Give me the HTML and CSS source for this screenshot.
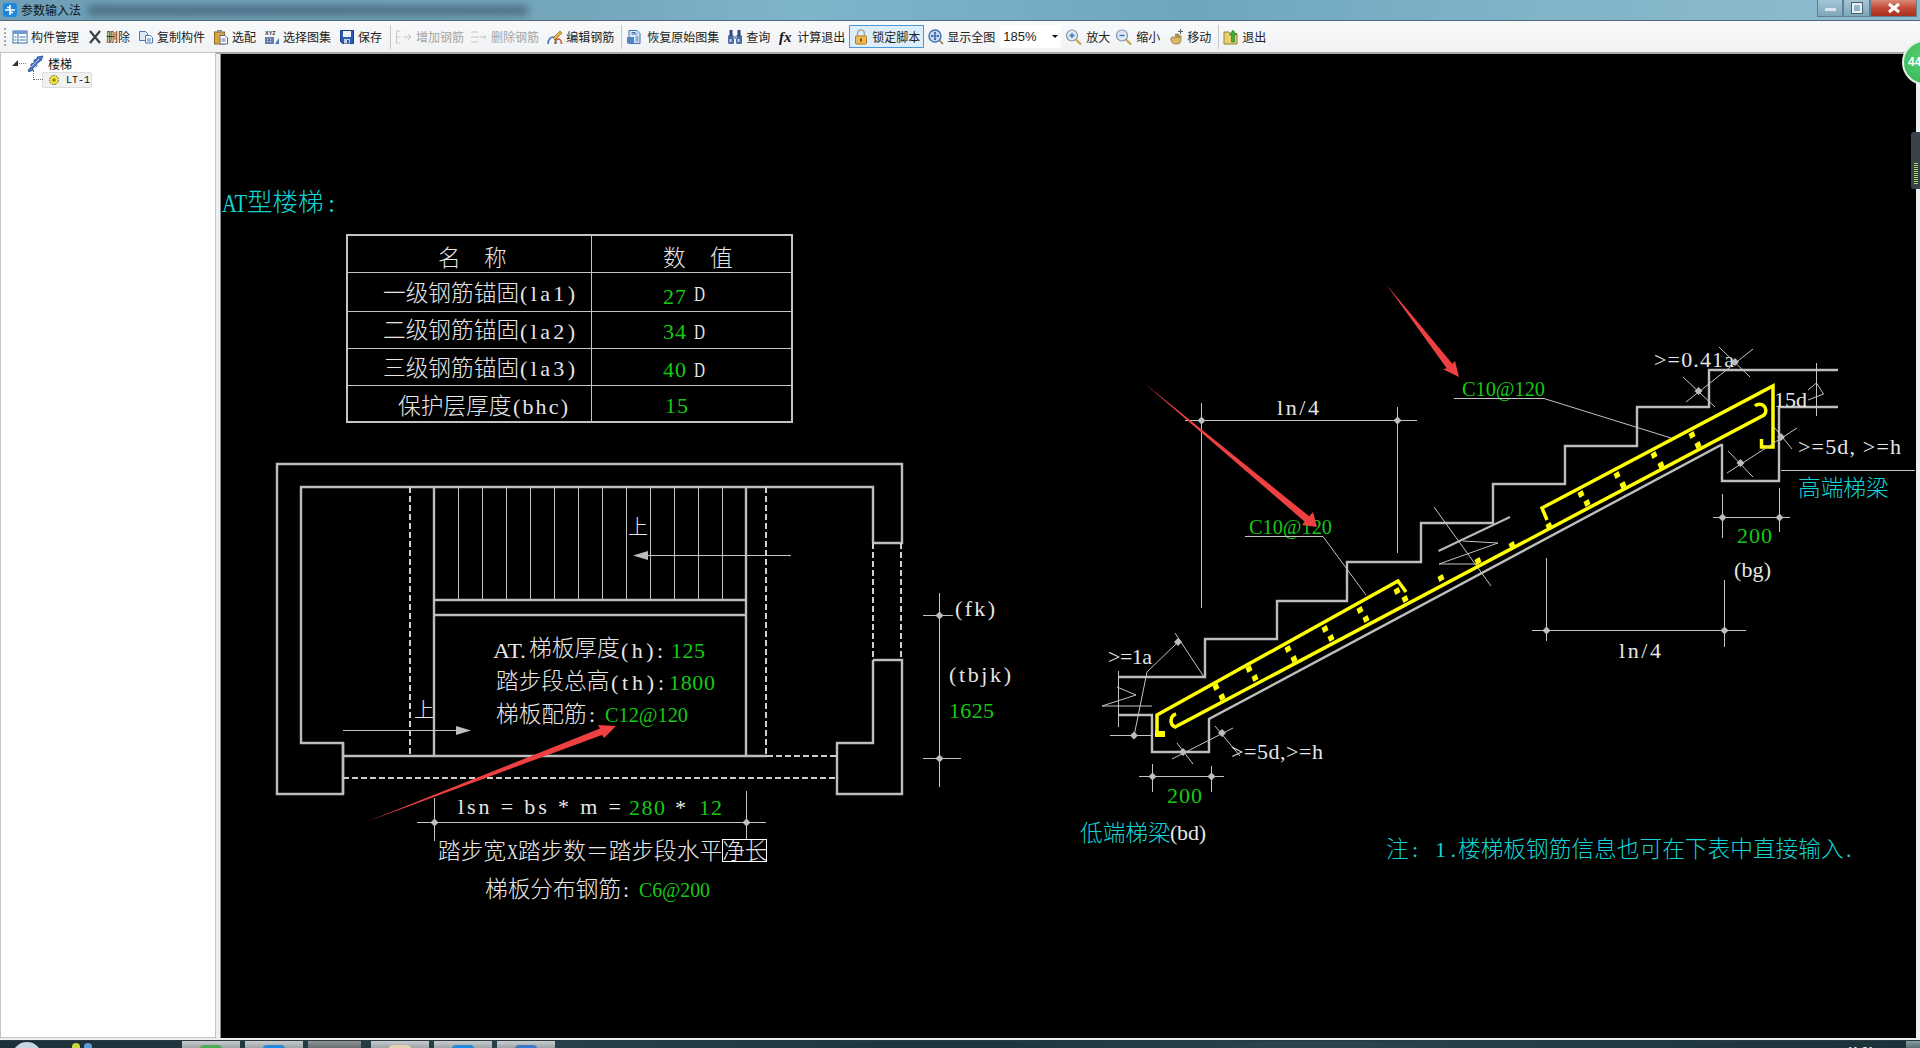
FILE: index.html
```html
<!DOCTYPE html>
<html lang="zh-CN">
<head>
<meta charset="utf-8">
<title>参数输入法</title>
<link rel="stylesheet" href="styles.css">
</head>
<body>
<div class="screen">
  <div class="window">
    <header class="titlebar">
      <svg class="appicon" viewBox="0 0 16 16"><rect x="1" y="1" width="14" height="14" rx="3" fill="#1f86e0"/><path d="M8 3v10M3 8h10M5 5.5h3M8 10.5h3" stroke="#fff" stroke-width="1.6" fill="none"/></svg>
      <span class="apptitle">参数输入法</span>
      <div class="blurred"></div>
      <div class="winbtns">
        <div class="wb wb-min"><i></i></div>
        <div class="wb wb-max"><i></i></div>
        <div class="wb wb-close">
          <svg viewBox="0 0 16 12" width="16" height="12"><path d="M3 2l10 8M13 2L3 10" stroke="#fff" stroke-width="3"/></svg>
        </div>
      </div>
    </header>

    <nav class="toolbar">
      <div class="grip"></div>
      <div class="ti first"><svg class="ic" viewBox="0 0 16 16"><rect x="1" y="2" width="14" height="12" fill="#fff" stroke="#3a6ea5"/><rect x="1" y="2" width="14" height="3" fill="#6d9ad0"/><path d="M6 5v9M7.500 8h6M7.500 11h6M2.500 8h2M2.500 11h2" stroke="#3a6ea5"/></svg><span>构件管理</span></div>
      <div class="ti"><svg class="ic" viewBox="0 0 16 16"><path d="M3 2l10 12M13 2L3 14" stroke="#3c4046" stroke-width="2.200"/></svg><span>删除</span></div>
      <div class="ti"><svg class="ic" viewBox="0 0 16 16"><path d="M1.500 2.500h6l2 2v7h-8z" fill="#dfe9f6" stroke="#4a78b8"/><path d="M7.500 6.500h5l2 2v5.500h-7z" fill="#fff" stroke="#4a78b8"/><path d="M9 10h4M9 12h4" stroke="#4a78b8"/></svg><span>复制构件</span></div>
      <div class="ti"><svg class="ic" viewBox="0 0 16 16"><rect x="1.500" y="3" width="10" height="12" fill="#d8a83e" stroke="#8a6a20"/><rect x="4" y="1" width="5" height="3" fill="#8f8f8f"/><path d="M7 6.500h5l2.500 2.500v6H7z" fill="#fff" stroke="#5a6a8a"/><path d="M8.500 10h4M8.500 12h4" stroke="#5a6a8a"/></svg><span>选配</span></div>
      <div class="ti"><svg class="ic" viewBox="0 0 16 16"><text class="xyz" x="1" y="6">XYZ</text><rect x="1" y="8" width="9" height="7" fill="#5f7fa8"/><path d="M3 10h1M6 10h1M3 12.500h1M6 12.500h1" stroke="#fff"/><path d="M11 15l4-6v6z" fill="#4a78b8"/></svg><span>选择图集</span></div>
      <div class="ti"><svg class="ic" viewBox="0 0 16 16"><path d="M1.500 1.500h13v13h-11l-2-2z" fill="#2c5cb4" stroke="#1c3c80"/><rect x="4" y="2" width="8" height="6" fill="#eef2f8"/><rect x="5" y="10" width="6" height="4.500" fill="#c8d0dc"/><rect x="8" y="11" width="2" height="3" fill="#2c5cb4"/></svg><span>保存</span></div>
      <div class="sep"></div>
      <div class="ti off"><svg class="ic w18" viewBox="0 0 18 16"><path d="M1.500 2h4M1.500 2v12M1.500 14h4M1.500 8h4M9 8h7M13 5l3 3-3 3" stroke="#c6c6c6" fill="none"/></svg><span>增加钢筋</span></div>
      <div class="ti off tight"><svg class="ic w18" viewBox="0 0 18 16"><path d="M1 3h7M1 8h8M1 13h7M10 8h6M14 6l2 2-2 2" stroke="#c6c6c6" fill="none"/></svg><span>删除钢筋</span></div>
      <div class="ti"><svg class="ic" viewBox="0 0 16 16"><path d="M1 15c0-5 3-7 5-7s3 3 3 7" fill="none" stroke="#4a78b8" stroke-width="1.600"/><path d="M8 15c0-4 2-5 3.500-5s3 2 3 5" fill="none" stroke="#c05a30" stroke-width="1.600"/><path d="M6 9l7-7 2 2-7 7z" fill="#e8b040" stroke="#705020" stroke-width=".6"/></svg><span>编辑钢筋</span></div>
      <div class="sep narrow"></div>
      <div class="ti"><svg class="ic w18" viewBox="0 0 18 16"><path d="M3 1.500h8l3 3v10H3z" fill="#dbe8f7" stroke="#3f6fb0"/><path d="M1 8h7v6.500H1z" fill="#4f86c8"/><path d="M5.500 5h6M5.500 3.500h4" stroke="#3f6fb0"/><path d="M9.500 8h3M9.500 10h3M9.500 12h3" stroke="#3f6fb0"/></svg><span>恢复原始图集</span></div>
      <div class="ti"><svg class="ic" viewBox="0 0 16 16"><rect x="1" y="6" width="6" height="9" rx="1.500" fill="#4c6aa0"/><rect x="9" y="6" width="6" height="9" rx="1.500" fill="#4c6aa0"/><rect x="2.500" y="1" width="3" height="6" fill="#30487a"/><rect x="10.500" y="1" width="3" height="6" fill="#30487a"/><rect x="6" y="7" width="4" height="3" fill="#8aa0c8"/><rect x="2.500" y="10" width="2" height="3" fill="#c4d2ea"/><rect x="10.500" y="10" width="2" height="3" fill="#c4d2ea"/></svg><span>查询</span></div>
      <div class="ti"><svg class="ic" viewBox="0 0 16 16"><text class="fx" x="1" y="13">fx</text></svg><span>计算退出</span></div>
      <div class="ti lock"><svg class="ic" viewBox="0 0 16 16"><path d="M4.500 7V4.500a3.500 3.500 0 0 1 7 0V7" fill="none" stroke="#a8a8a0" stroke-width="1.600"/><rect x="2.500" y="7" width="11" height="8" rx="1" fill="#eebb55" stroke="#b07c20"/><rect x="7" y="9.500" width="2" height="3" fill="#7a5010"/></svg><span>锁定脚本</span></div>
      <div class="ti"><svg class="ic" viewBox="0 0 16 16"><circle cx="7" cy="7" r="6" fill="#cfe0f4" stroke="#3f6fb0" stroke-width="1.400"/><path d="M7 3v8M3 7h8" stroke="#2c5a9c" stroke-width="1.200"/><path d="M7 2.500L5.500 4.500h3zM7 11.500l-1.500-2h3zM2.500 7l2-1.500v3zM11.500 7l-2-1.500v3z" fill="#2c5a9c"/><path d="M11.500 11.500l3.500 3.500" stroke="#8a7a50" stroke-width="1.600"/></svg><span>显示全图</span></div>
      <div class="combo"><span>185%</span><i></i></div>
      <div class="ti zoomi"><svg class="ic w18" viewBox="0 0 18 16"><circle cx="7" cy="6.500" r="5.500" fill="#dce8f4" stroke="#7d93ad" stroke-width="1.200"/><path d="M7 4v5M4.500 6.500h5" stroke="#3f6fb0" stroke-width="1.400"/><path d="M11 10.500l5 5" stroke="#c8a84e" stroke-width="2.200"/></svg><span>放大</span></div>
      <div class="ti zoomi tighter"><svg class="ic w18" viewBox="0 0 18 16"><circle cx="7" cy="6.500" r="5.500" fill="#dce8f4" stroke="#7d93ad" stroke-width="1.200"/><path d="M4.500 6.500h5" stroke="#3f6fb0" stroke-width="1.400"/><path d="M11 10.500l5 5" stroke="#c8a84e" stroke-width="2.200"/></svg><span>缩小</span></div>
      <div class="ti"><svg class="ic" viewBox="0 0 16 16"><path d="M3 9c-1 2 1 6 4 6h3c2 0 3-2 3-4V7l-1.500-.5L11 9V5.500L9.500 5 9 8.500V5L7.500 5 7 9 5 7.500z" fill="#d8b868" stroke="#85703c" stroke-width=".7"/><path d="M12.500 0v5M10 2.500h5" stroke="#55606e"/></svg><span>移动</span></div>
      <div class="sep narrow"></div>
      <div class="ti"><svg class="ic" viewBox="0 0 16 16"><path d="M1 3h5l1 1.500h7V15H1z" fill="#e8d070" stroke="#9a8030"/><path d="M8.500 13V6H6.500L10 1l3.500 5H11.500v7z" fill="#3fae3f" stroke="#1f7a1f" stroke-width=".6"/></svg><span>退出</span></div>
    </nav>

    <main class="main">
      <aside class="tree">
        <div class="node root">
          <i class="expander"></i><i class="dots-h"></i>
          <svg class="stairicon" viewBox="0 0 17 17"><path d="M1 15l3-3v-3l3-1V5l3-1V2l6-1-2 5-4 2v3l-4 2v2l-4 2z" fill="#4a78c8" stroke="#1f3f80" stroke-width=".7"/><path d="M4 12l8-8M6 14l8-8" stroke="#cfe0f8" stroke-width=".8"/></svg>
          <span>楼梯</span>
        </div>
        <div class="node child">
          <i class="elbow"></i>
          <div class="chip">
            <svg class="gear" viewBox="0 0 12 12"><circle cx="6" cy="6" r="4.500" fill="#f2e640" stroke="#5c5a10" stroke-width="1" stroke-dasharray="1.500 1"/><circle cx="6" cy="6" r="1.800" fill="#8a8620"/></svg>
            <span>LT-1</span>
          </div>
        </div>
      </aside>

      <section class="canvas">
        <svg class="cad" width="1695" height="982" viewBox="221 54 1695 982">
          <defs>
            <path id="d" d="M0 -4L4 0L0 4L-4 0Z" class="dotf"/>
            <path id="s" d="M-3.500 -1L1.500 -4L3.500 1L-1.500 4Z" class="yf"/>
          </defs>

          <!-- heading and table -->
          <text class="l cy big" x="222" y="212" textLength="25" lengthAdjust="spacingAndGlyphs">AT</text>
          <text class="c cy big" x="247" y="211">型楼梯</text>
          <text class="l cy big" x="328" y="212">:</text>

          <rect class="tb" x="347" y="235" width="445" height="187"/>
          <path class="tn" d="M348 272.500H791M348 311.500H791M348 348.500H791M348 385.500H791M591.500 236V421"/>

          <text class="c w" x="438" y="266">名</text><text class="c w" x="484" y="266">称</text>
          <text class="c w" x="663" y="266">数</text><text class="c w" x="710" y="266">值</text>

          <text class="c w" x="383" y="301">一级钢筋锚固</text><text class="l w" x="520" y="301" textLength="55" lengthAdjust="spacing">(la1)</text>
          <text class="c w" x="383" y="338">二级钢筋锚固</text><text class="l w" x="520" y="339" textLength="55" lengthAdjust="spacing">(la2)</text>
          <text class="c w" x="383" y="376">三级钢筋锚固</text><text class="l w" x="520" y="376" textLength="55" lengthAdjust="spacing">(la3)</text>
          <text class="c w" x="398" y="414">保护层厚度</text><text class="l w" x="513" y="414" textLength="55" lengthAdjust="spacing">(bhc)</text>

          <text class="l g" x="663" y="304" textLength="23" lengthAdjust="spacing">27</text><text class="l w" x="694" y="301" textLength="11" lengthAdjust="spacingAndGlyphs">D</text>
          <text class="l g" x="663" y="339" textLength="23" lengthAdjust="spacing">34</text><text class="l w" x="694" y="339" textLength="11" lengthAdjust="spacingAndGlyphs">D</text>
          <text class="l g" x="663" y="377" textLength="23" lengthAdjust="spacing">40</text><text class="l w" x="694" y="377" textLength="11" lengthAdjust="spacingAndGlyphs">D</text>
          <text class="l g" x="665" y="413" textLength="23" lengthAdjust="spacing">15</text>

          <!-- floor plan -->
          <path class="th" d="M873 543V487H301V743H343V794H277V464H902V543H873"/>
          <path class="th" d="M873 660H902V794H837V743H873V660"/>
          <path class="th" d="M343 756H767M343 743V794"/>
          <path class="th" d="M434 487V756M746 487V756M434 600H746M434 615H746"/>
          <path class="td" d="M410 487V756M766 487V756M873 543V660M901 543V660M767 756H837M343 778H837"/>
          <path class="tn" d="M458.500 487V600M482.500 487V600M506.500 487V600M530.500 487V600M554.500 487V600M578.500 487V600M602.500 487V600M626.500 487V600M650.500 487V600M674.500 487V600M698.500 487V600M722.500 487V600"/>
          <path class="tn" d="M648 555.500H791M343 730.500H457"/>
          <path class="dotp" d="M633 555.500L648 551V560ZM471 730.500L456 726V735Z"/>
          <text class="c w s20" x="628" y="534">上</text>
          <text class="c w s20" x="414" y="717">上</text>

          <text class="l w" x="493" y="658" textLength="33" lengthAdjust="spacingAndGlyphs">AT.</text><text class="c w" x="529" y="656">梯板厚度</text><text class="l w" x="621" y="658" textLength="42" lengthAdjust="spacing">(h):</text><text class="l g" x="671" y="658" textLength="34" lengthAdjust="spacing">125</text>
          <text class="c w" x="496" y="689">踏步段总高</text><text class="l w" x="611" y="690" textLength="53" lengthAdjust="spacing">(th):</text><text class="l g" x="669" y="690" textLength="46" lengthAdjust="spacing">1800</text>
          <text class="c w" x="496" y="722">梯板配筋</text><text class="l w" x="589" y="722">:</text><text class="l g" x="605" y="722" textLength="83" lengthAdjust="spacingAndGlyphs">C12@120</text>

          <text class="l w" x="458" y="814" textLength="163" lengthAdjust="spacing">lsn = bs * m =</text><text class="l g" x="629" y="815" textLength="36" lengthAdjust="spacing">280</text><text class="l w" x="675" y="815" textLength="11" lengthAdjust="spacing">*</text><text class="l g" x="699" y="815" textLength="23" lengthAdjust="spacing">12</text>
          <path class="tn" d="M417 822.500H766M434.500 798V841M746.500 791V840"/>
          <use href="#d" x="434.500" y="822.500"/><use href="#d" x="746.500" y="822.500"/>

          <text class="c w" x="438" y="859">踏步宽</text><text class="l w" x="507" y="859" textLength="11" lengthAdjust="spacingAndGlyphs">X</text><text class="c w" x="518" y="859">踏步数＝踏步段水平净长</text>
          <rect class="box" x="722.500" y="839.500" width="44" height="22"/>
          <text class="c w" x="485" y="897">梯板分布钢筋</text><text class="l w" x="623" y="897">:</text><text class="l g" x="639" y="897" textLength="71" lengthAdjust="spacingAndGlyphs">C6@200</text>

          <path class="tn" d="M939.500 593V787M923 615.500H953M923 758.500H961"/>
          <use href="#d" x="939.500" y="615.500"/><use href="#d" x="939.500" y="758.500"/>
          <text class="l w" x="955" y="616" textLength="40" lengthAdjust="spacing">(fk)</text>
          <text class="l w" x="949" y="682" textLength="62" lengthAdjust="spacing">(tbjk)</text>
          <text class="l g" x="949" y="718" textLength="45" lengthAdjust="spacing">1625</text>

          <!-- stair section -->
          <path class="th" d="M1838 370H1709V407H1637V446H1565V484H1493V523H1421V562H1347V601H1277V639H1205V677H1118"/>
          <path class="th" d="M1118 715H1152V752H1209V719L1721 445H1722V481H1779V407H1838"/>
          <path class="tg" d="M1438.500 551L1510 517"/>

          <path class="tn" d="M1185 420.500H1417M1201.500 403V608M1397.500 407V553"/>
          <use href="#d" x="1201.500" y="420.500"/><use href="#d" x="1397.500" y="420.500"/>
          <text class="l w" x="1277" y="415" textLength="42" lengthAdjust="spacing">ln/4</text>

          <text class="l g" x="1249" y="534" textLength="83" lengthAdjust="spacingAndGlyphs">C10@120</text>
          <path class="tn" d="M1245 536.500H1323L1366 595"/>
          <text class="l g" x="1462" y="396" textLength="83" lengthAdjust="spacingAndGlyphs">C10@120</text>
          <path class="tn" d="M1454 398.500H1544L1671 438"/>

          <path class="tn" d="M1439 564L1498 543L1463 541M1439 564H1478M1434 507L1491 586"/>

          <!-- rebar -->
          <path class="rb" d="M1157 735V715L1398 581L1406 592"/>
          <path class="rb" d="M1176 714A7 7 0 0 0 1175 727L1764 415A6 6 0 0 0 1755 406"/>
          <path class="rb" d="M1547 520L1542 508L1773 386V447H1761.500V439"/>
          <path class="rbf" d="M1155 731H1165V737H1155Z"/>
          <use href="#s" x="1216" y="687"/><use href="#s" x="1249" y="669"/><use href="#s" x="1288" y="649"/><use href="#s" x="1325" y="629"/><use href="#s" x="1360" y="610"/><use href="#s" x="1397" y="591"/>
          <use href="#s" x="1222" y="697"/><use href="#s" x="1255" y="678"/><use href="#s" x="1294" y="659"/><use href="#s" x="1331" y="638"/><use href="#s" x="1366" y="619"/><use href="#s" x="1405" y="599"/><use href="#s" x="1441" y="578"/><use href="#s" x="1478" y="561"/><use href="#s" x="1512" y="545"/><use href="#s" x="1549" y="526"/><use href="#s" x="1587" y="503"/><use href="#s" x="1623" y="485"/><use href="#s" x="1661" y="465"/><use href="#s" x="1698" y="445"/>
          <use href="#s" x="1581" y="494"/><use href="#s" x="1617" y="475"/><use href="#s" x="1654" y="455"/><use href="#s" x="1692" y="435"/>

          <!-- lower end notes -->
          <text class="l w" x="1108" y="664" textLength="44" lengthAdjust="spacing">&gt;=1a</text>
          <path class="tn" d="M1175 633L1204 677M1178 642L1147 672L1134 736M1110 735.500H1152M1118.500 671V727M1117 687L1136 695L1102 706H1152"/>
          <use href="#d" x="1178" y="642"/><use href="#d" x="1134" y="735.500"/>
          <path class="tn" d="M1172 759L1233 728M1177 743L1193 764M1215 726L1240 756"/>
          <use href="#d" x="1183" y="752"/><use href="#d" x="1222" y="733"/>
          <text class="l w" x="1231" y="759" textLength="92" lengthAdjust="spacing">&gt;=5d,&gt;=h</text>
          <path class="tn" d="M1139 776.500H1224M1152.500 764V792M1211.500 766V792"/>
          <use href="#d" x="1152.500" y="776.500"/><use href="#d" x="1211.500" y="776.500"/>
          <text class="l g" x="1167" y="803" textLength="35" lengthAdjust="spacing">200</text>
          <text class="c cy" x="1080" y="841">低端梯梁</text><text class="l w" x="1170" y="840" textLength="36" lengthAdjust="spacing">(bd)</text>

          <text class="c cy" x="1386" y="857">注</text><text class="l cy" x="1412" y="857">:</text><text class="l cy" x="1435" y="857" textLength="21" lengthAdjust="spacing">1.</text><text class="c cy" x="1458" y="857">楼梯板钢筋信息也可在下表中直接输入</text><text class="l cy" x="1846" y="857">.</text>

          <!-- upper end notes -->
          <text class="l w" x="1654" y="367" textLength="80" lengthAdjust="spacing">&gt;=0.41a</text>
          <path class="tn" d="M1686 402L1753 349M1719 347L1750 377M1683 377L1715 407"/>
          <use href="#d" x="1735" y="362"/><use href="#d" x="1698.500" y="391"/>
          <text class="l w" x="1774" y="407" textLength="33" lengthAdjust="spacing">15d</text>
          <path class="tn" d="M1816.500 363V416M1808 390L1816.500 383L1823.500 394L1808 400"/>
          <text class="l w" x="1798" y="454" textLength="103" lengthAdjust="spacing">&gt;=5d, &gt;=h</text>
          <path class="tn" d="M1727 473L1797 428M1774 427L1792 449M1728 451L1753 477M1781 470.500H1915"/>
          <use href="#d" x="1781" y="437"/><use href="#d" x="1740.500" y="463"/>
          <text class="c cy" x="1798" y="496">高端梯梁</text>
          <path class="tn" d="M1713 517.500H1790M1722.500 494V538M1779.500 488V532"/>
          <use href="#d" x="1722.500" y="517.500"/><use href="#d" x="1779.500" y="517.500"/>
          <text class="l g" x="1737" y="543" textLength="35" lengthAdjust="spacing">200</text>
          <text class="l w" x="1734" y="577" textLength="37" lengthAdjust="spacing">(bg)</text>
          <path class="tn" d="M1532 630.500H1746M1546.500 558V641M1724.500 580V647"/>
          <use href="#d" x="1546.500" y="630.500"/><use href="#d" x="1724.500" y="630.500"/>
          <text class="l w" x="1619" y="658" textLength="42" lengthAdjust="spacing">ln/4</text>

          <!-- red annotation arrows -->
          <path class="ra" d="M366 822L600 728.500L598 725L616 726L604 738L602 735Z"/>
          <path class="ra" d="M1144 383L1309.200 516.300L1313 512L1317 527L1302 525L1304.800 521.700Z"/>
          <path class="ra" d="M1386 284L1452.300 363.800L1455 361L1459 377L1443 369.300L1446.700 368.200Z"/>
        </svg>
      </section>
    </main>
  </div>

  <footer class="taskbar">
    <div class="orb"></div>
    <div class="pins"><i class="p1"></i><i class="p2"></i></div>
    <div class="tabs">
      <div class="tab"><i class="t-green"></i></div>
      <div class="tab"><i class="t-blue"></i></div>
      <div class="tab t-narrow"></div>
      <div class="tab"><i class="t-tan"></i></div>
      <div class="tab"><i class="t-blue"></i></div>
      <div class="tab"><i class="t-blue2"></i></div>
    </div>
    <div class="clock">11:21</div>
    <div class="showdesk"></div>
  </footer>

  <div class="badge">44</div>
  <div class="meter"><i></i></div>
</div>
</body>
</html>
```

FILE: styles.css
```css
* { box-sizing: border-box; }
html, body { margin: 0; padding: 0; background: #000; }
.screen {
  position: relative;
  width: 1920px;
  height: 1048px;
  overflow: hidden;
  display: flex;
  flex-direction: column;
  font-family: "Noto Sans CJK SC", "Liberation Sans", sans-serif;
  font-size: 12px;
  color: #222;
}
.window { flex: 1; min-height: 0; display: flex; flex-direction: column; background: #eceff1; }

/* title bar */
.titlebar {
  position: relative;
  height: 21px;
  flex: none;
  display: flex;
  align-items: center;
  padding-left: 2px;
  overflow: hidden;
  background: linear-gradient(90deg, #6f9fb6 0, #74a6bc 30%, #7fb5cb 42%, #6fa6bf 62%, #80b4c9 80%, #8fbccd 100%);
  border-bottom: 1px solid #50687a;
}
.appicon { width: 16px; height: 16px; flex: none; }
.apptitle { margin-left: 3px; font-size: 12px; line-height: 16px; color: #0a141c; }
.blurred {
  position: absolute;
  left: 88px;
  top: 6px;
  width: 440px;
  height: 9px;
  background: #3c5a70;
  opacity: .8;
  filter: blur(4px);
}
.winbtns { margin-left: auto; margin-right: 3px; height: 18px; align-self: flex-start; display: flex; }
.wb { height: 17px; border: 1px solid #5c7f92; border-top: 0; display: flex; align-items: center; justify-content: center; }
.wb-min { width: 26px; background: linear-gradient(#a5c6d6, #7ea6b9); }
.wb-min i { width: 11px; height: 3px; background: #d7e5ec; margin-top: 2px; }
.wb-max { width: 27px; background: linear-gradient(#a5c6d6, #7ea6b9); }
.wb-max i { width: 10px; height: 10px; border: 2px solid #e9f0f3; outline: 1px solid #46606f; }
.wb-close { width: 47px; background: linear-gradient(#d98a78 0, #c44a36 50%, #a8301f 100%); }

/* toolbar */
.toolbar {
  height: 33px;
  flex: none;
  display: flex;
  align-items: center;
  padding-left: 4px;
  background: linear-gradient(#f8f9fa, #f1f2f3);
  border-bottom: 2px solid #a9a9a9;
  white-space: nowrap;
  line-height: 16px;
}
.grip { width: 2px; height: 18px; background: repeating-linear-gradient(#a8a8a8 0 2px, transparent 2px 4px); }
.ti { display: flex; align-items: center; gap: 3px; padding: 0 4px; flex: none; height: 23px; }
.ti.first { margin-left: 0; padding-left: 6px; }
.ti.off { color: #a6a6a6; }
.ti.tight { margin-left: -2px; }
.ti.tighter { margin-left: -3px; }
.ic { width: 16px; height: 16px; flex: none; display: block; }
.ic.w18 { width: 18px; }
.sep { width: 1px; height: 24px; background: #c9c9c9; margin-left: 4px; flex: none; }
.sep.narrow { margin-left: 3px; }
.lock { background: #dcedfb; border: 1px solid #4a97dc; padding: 0 3px; }
.combo {
  position: relative;
  width: 61px;
  height: 23px;
  margin-left: 1px;
  padding-left: 3px;
  display: flex;
  align-items: center;
  background: #fff;
  font-family: "Liberation Sans", sans-serif;
  font-size: 13px;
  flex: none;
}
.combo i {
  margin-left: auto;
  margin-right: 3px;
  border: 3px solid transparent;
  border-top: 3px solid #111;
  border-bottom: 0;
}
.xyz { font-family: "Liberation Sans", sans-serif; font-size: 5.500px; font-weight: 700; fill: #333; }
.fx { font-family: "Liberation Serif", serif; font-style: italic; font-weight: 700; font-size: 15px; fill: #111; }

/* layout */
.main { flex: 1; min-height: 0; display: flex; padding-bottom: 2px; }
.tree {
  width: 216px;
  flex: none;
  margin-right: 4px;
  margin-top: -2px;
  background: #fff;
  border: 1px solid #c4c4c4;
  padding-top: 1px;
}
.node { display: flex; align-items: center; position: relative; }
.root { height: 18px; padding-left: 11px; font-size: 12px; color: #111; }
.expander { width: 0; height: 0; border-left: 6px solid transparent; border-bottom: 6px solid #333; flex: none; }
.dots-h { width: 7px; border-top: 1px dotted #777; margin: 0 1px; flex: none; }
.stairicon { width: 17px; height: 17px; flex: none; margin-right: 4px; }
.child { height: 16px; padding-left: 41px; }
.elbow {
  position: absolute;
  left: 32px;
  top: -2px;
  width: 10px;
  height: 10px;
  border-left: 1px dotted #666;
  border-bottom: 1px dotted #666;
}
.chip {
  width: 50px;
  height: 16px;
  display: flex;
  align-items: center;
  gap: 6px;
  padding-left: 5px;
  background: #f1f1f1;
  border: 1px solid #dcdcdc;
  border-radius: 2px;
  font-family: "Liberation Mono", monospace;
  font-size: 10px;
  color: #111;
}
.gear { width: 12px; height: 12px; flex: none; }
.canvas { flex: 1; min-width: 0; background: #000; margin-right: 4px; border-left: 1px solid #8e8e8e; }
.cad { display: block; margin-left: 0; }

/* CAD drawing */
.c { font-family: "Noto Sans CJK SC", sans-serif; font-size: 22.700px; font-weight: 300; }
.l { font-family: "Liberation Serif", "Noto Sans CJK SC", serif; font-size: 22px; }
.big { font-size: 25.500px; }
.s20 { font-size: 20px; }
.w { fill: #e6e6e6; }
.g { fill: #16c916; }
.cy { fill: #12d4d4; }
.tb, .th, .tn, .td, .tg, .rb { fill: none; }
.tb { stroke: #c4c4c4; stroke-width: 2; }
.th { stroke: #bdbdbd; stroke-width: 2.400; }
.tg { stroke: #b8b8b8; stroke-width: 2; }
.tn { stroke: #c4c4c4; stroke-width: 1; }
.td { stroke: #cfcfcf; stroke-width: 2; stroke-dasharray: 6 3; }
.box { fill: none; stroke: #fff; stroke-width: 1; }
.dotf, .dotp { fill: #bdbdbd; }
.rb { stroke: #ffff00; stroke-width: 3.500; stroke-linejoin: miter; }
.rbf, .yf { fill: #ffff00; }
.ra { fill: #ee4040; }

/* taskbar */
.taskbar {
  height: 8px;
  flex: none;
  display: flex;
  overflow: hidden;
  border-top: 1px solid #2b3a40;
  background: linear-gradient(90deg, #1b3038 0, #27424c 28%, #1c343c 50%, #2a4550 68%, #1b3038 100%);
  position: relative;
}
.orb { width: 30px; height: 30px; margin-left: 12px; margin-top: 1px; border-radius: 50%; background: #c8d4e0; flex: none; }
.pins { width: 24px; margin-left: 30px; display: flex; gap: 4px; padding-top: 2px; flex: none; }
.pins i { width: 8px; height: 8px; border-radius: 50%; }
.p1 { background: #c8d83c; }
.p2 { background: #5c9ad8; }
.tabs { display: flex; gap: 5px; margin-left: 86px; }
.tab { width: 58px; height: 10px; display: flex; justify-content: center; padding-top: 4px; background: linear-gradient(#c8ccce, #8c9496); }
.t-narrow { width: 53px; margin-right: 5px; background: linear-gradient(#8e9496, #586064); }
.tab i { width: 22px; height: 8px; border-radius: 4px 4px 0 0; }
.t-green { background: #4cae52; }
.t-blue { background: #1f8ae0; }
.t-blue2 { background: #3a78c8; }
.t-tan { background: #e8d0b0; }
.clock { position: absolute; right: 46px; top: 4px; color: #fff; font-family: "Liberation Sans", sans-serif; font-size: 11px; line-height: 12px; }
.showdesk { position: absolute; right: 0; top: 0; width: 14px; height: 8px; background: linear-gradient(#8a9ca4, #52646c); }

/* overlays */
.badge {
  position: absolute;
  left: 1902px;
  top: 40px;
  width: 45px;
  height: 45px;
  border-radius: 50%;
  border: 2px solid #e6efe6;
  background: radial-gradient(circle at 45% 40%, #57d070, #2fb552);
  color: #fff;
  font-family: "Liberation Sans", sans-serif;
  font-weight: 700;
  font-size: 12px;
  line-height: 41px;
  padding-left: 4px;
}
.meter {
  position: absolute;
  left: 1911px;
  top: 132px;
  width: 12px;
  height: 57px;
  border-radius: 3px;
  background: #3a424c;
}
.meter i {
  position: absolute;
  left: 3px;
  top: 31px;
  width: 4px;
  height: 21px;
  background: repeating-linear-gradient(#a8d870 0 1px, #2a3038 1px 2px);
}
```
